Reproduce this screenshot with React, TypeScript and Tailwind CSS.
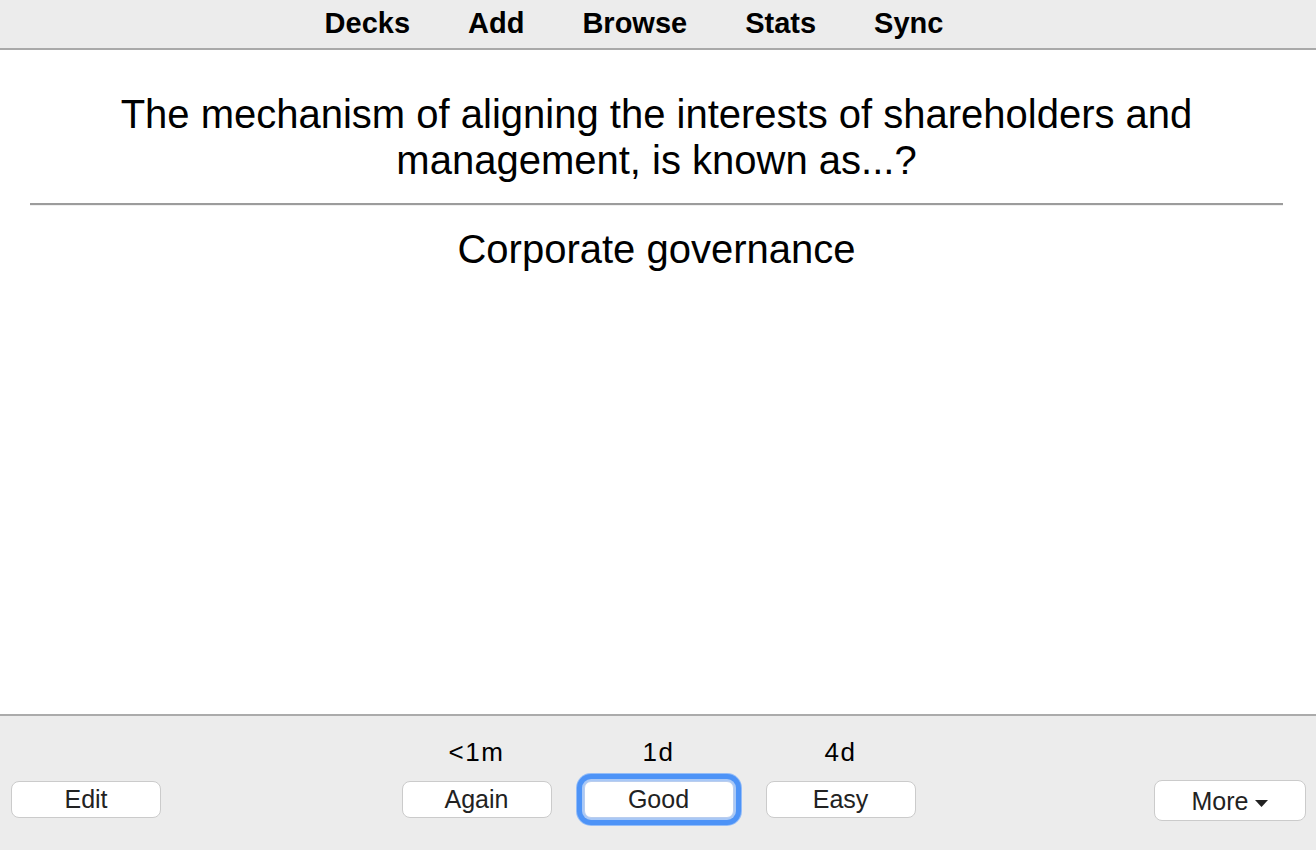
import React from "react";

// ── Top toolbar ───────────────────────────────────────────────────────────────
const NAV = ["Decks", "Add", "Browse", "Stats", "Sync"];

function Toolbar() {
  return (
    <div className="h-[50px] shrink-0 bg-[#ececec] border-b-2 border-[#a9a9a9] flex items-center justify-center pr-[48px] pb-[3px]">
      <div className="flex gap-[58px]">
        {NAV.map((n) => (
          <span key={n} className="text-[29px] font-bold leading-[34px] text-black">
            {n}
          </span>
        ))}
      </div>
    </div>
  );
}

// ── Answer button ─────────────────────────────────────────────────────────────
function Btn({ label, focused = false }: { label: string; focused?: boolean }) {
  return (
    <div
      className={
        focused
          ? "w-[150px] h-[37px] rounded-[7px] bg-white border border-[#b9cdee] shadow-[0_0_0_2px_#a9c8f6,0_0_0_7px_#4d93f7,0_0_0_8px_#94bdf8] flex items-center justify-center text-[25px] text-[#222]"
          : "w-[150px] h-[37px] rounded-[8px] bg-white border-[1.5px] border-[#cbcbcb] flex items-center justify-center text-[25px] text-[#222]"
      }
    >
      {label}
    </div>
  );
}

function Answer({ due, label, focused }: { due: string; label: string; focused?: boolean }) {
  return (
    <div className="flex flex-col items-center">
      <span className="h-[28px] leading-[28px] text-[26px] tracking-[1.5px] text-black">{due}</span>
      <div className="mt-[15px]">
        <Btn label={label} focused={focused} />
      </div>
    </div>
  );
}

// ── Bottom bar ────────────────────────────────────────────────────────────────
function BottomBar() {
  return (
    <div className="h-[136px] shrink-0 bg-[#ececec] border-t-2 border-[#ababab] pt-[22px] pl-[11px] pr-[10px] grid grid-cols-[1fr_auto_1fr] items-end content-start">
      <div className="justify-self-start">
        <Btn label="Edit" />
      </div>
      <div className="flex gap-[32px]">
        <Answer due="<1m" label="Again" />
        <Answer due="1d" label="Good" focused />
        <Answer due="4d" label="Easy" />
      </div>
      <div className="justify-self-end mb-[-3px]">
        <div className="w-[152px] h-[41px] rounded-[8px] bg-white border-[1.5px] border-[#cbcbcb] flex items-center justify-center gap-[7px] text-[25px] text-[#222] pt-[2px]">
          <span>More</span>
          <svg width="13" height="7" viewBox="0 0 13 7" className="mt-[3px]">
            <polygon points="0,0 13,0 6.5,7" fill="#222" />
          </svg>
        </div>
      </div>
    </div>
  );
}

// ── Main ──────────────────────────────────────────────────────────────────────
export default function App() {
  return (
    <div className="w-[1316px] h-[850px] flex flex-col bg-white font-['Liberation_Sans',Arial,sans-serif] overflow-hidden">
      <Toolbar />
      <main className="flex-1 pl-[30px] pr-[33px] pt-[41px] text-center text-black">
        <div className="text-[40px] leading-[46px]">
          The mechanism of aligning the interests of shareholders and
          <br />
          management, is known as...?
        </div>
        <div className="mt-[20px] h-[3px] border-t-2 border-[#9c9c9c] bg-[#f0f0f0]" />
        <div className="mt-[20px] text-[40px] leading-[46px]">Corporate governance</div>
      </main>
      <BottomBar />
    </div>
  );
}
